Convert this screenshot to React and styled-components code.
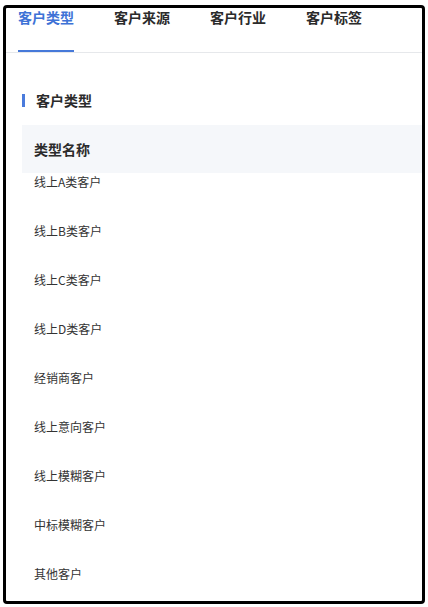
import styled, { createGlobalStyle } from "styled-components";

const GlobalStyle = createGlobalStyle`
  html, body {
    margin: 0;
    padding: 0;
    background: #ffffff;
    font-family: "Noto Sans CJK SC", "Noto Sans", sans-serif;
  }
`;

const tabs = ["客户类型", "客户来源", "客户行业", "客户标签"];

const rows = [
  "线上A类客户",
  "线上B类客户",
  "线上C类客户",
  "线上D类客户",
  "经销商客户",
  "线上意向客户",
  "线上模糊客户",
  "中标模糊客户",
  "其他客户",
];

const App = () => {
  return (
    <>
      <GlobalStyle />
      <Frame>
        <TabBar>
          {tabs.map((t, i) => (
            <Tab key={t} $active={i === 0}>
              {t}
            </Tab>
          ))}
        </TabBar>
        <Content>
          <SectionTitle>客户类型</SectionTitle>
          <Table>
            <HeaderRow>类型名称</HeaderRow>
            {rows.map((r) => (
              <Row key={r}>{r}</Row>
            ))}
          </Table>
        </Content>
      </Frame>
    </>
  );
};

const Frame = styled.div`
  box-sizing: border-box;
  margin: 5px 0 0 3px;
  width: 422px;
  height: 599px;
  border: 3px solid #000;
  border-radius: 4px;
  overflow: hidden;
  background: #fff;
`;

const TabBar = styled.div`
  display: flex;
  gap: 40px;
  padding: 0 12px;
  height: 44px;
  border-bottom: 1px solid #e6e8eb;
`;

const Tab = styled.div`
  box-sizing: border-box;
  height: 44px;
  padding-top: 0;
  font-size: 14px;
  line-height: 18px;
  font-weight: 600;
  color: ${(p) => (p.$active ? "#3e72d6" : "#2b2b2b")};
  border-bottom: 2px solid ${(p) => (p.$active ? "#4679d9" : "transparent")};
`;

const Content = styled.div`
  padding: 40px 0 0 16px;
`;

const SectionTitle = styled.div`
  display: flex;
  align-items: center;
  gap: 11px;
  height: 14px;
  font-size: 14px;
  line-height: 14px;
  font-weight: 600;
  color: #2b2b2b;
  margin-bottom: 18px;

  &::before {
    content: "";
    display: block;
    width: 3px;
    height: 13px;
    background: #4a7bdc;
  }
`;

const Table = styled.div`
  display: flex;
  flex-direction: column;
`;

const HeaderRow = styled.div`
  height: 48px;
  display: flex;
  align-items: center;
  padding-left: 12px;
  background: #f5f7fa;
  font-size: 14px;
  font-weight: 600;
  color: #2b2b2b;
`;

const Row = styled.div`
  box-sizing: border-box;
  height: 49px;
  flex: none;
  padding-left: 12px;
  font-size: 12px;
  line-height: 18px;
  color: #333;
`;

export default App;
